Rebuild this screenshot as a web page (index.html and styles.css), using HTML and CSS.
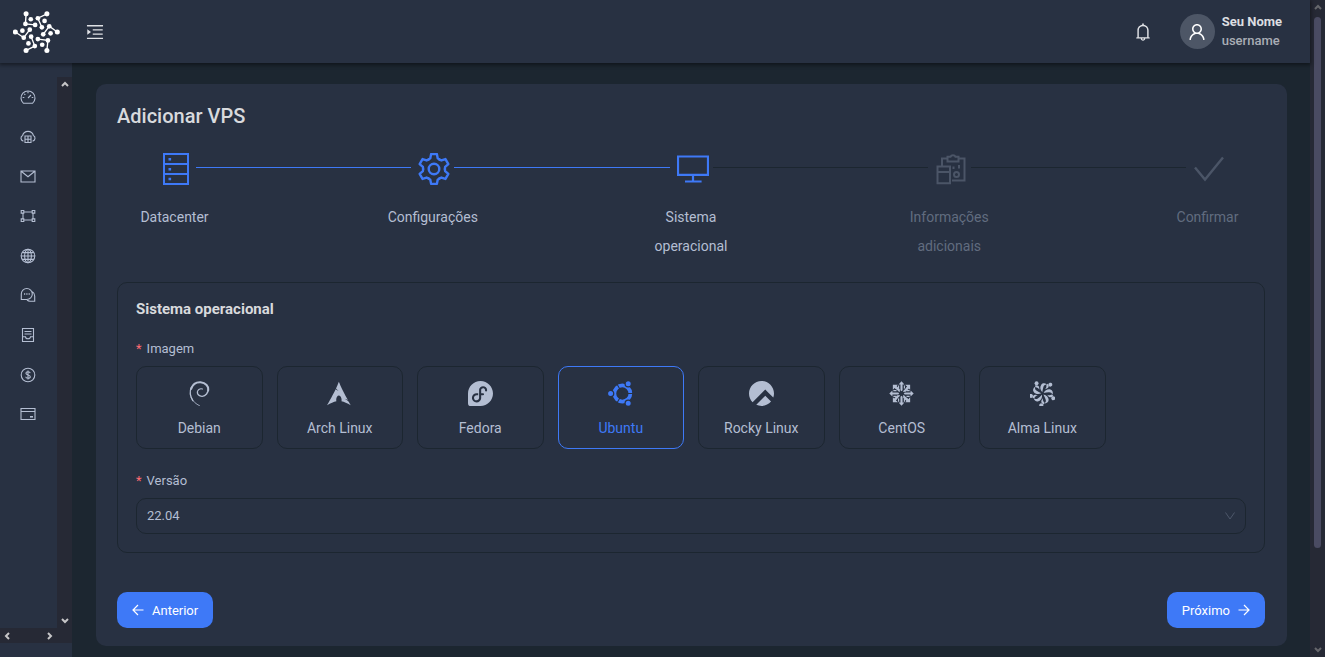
FILE: index.html
```html
<!DOCTYPE html>
<html lang="pt-BR">
<head>
<meta charset="utf-8">
<meta name="viewport" content="width=device-width, initial-scale=1">
<title>Adicionar VPS</title>
<link rel="stylesheet" href="styles.css">
</head>
<body>
<div class="window">
  <div class="app">
    <header class="topbar">
      <a class="logo" href="#" aria-label="Início">
        <svg viewBox="39 33 140 124" width="47" height="42" fill="#fff" stroke="#fff">
          <g fill="none" stroke-width="4">
            <path d="M78 41 76 71 105 74M140 41 113 54 125 81M171 95 147 78 129 102M140 150 143 120 113 116M78 150 104 137 93 109M46 95 71 112 89 88"/>
          </g>
          <g stroke="none">
            <circle cx="78" cy="41" r="7.5"/><circle cx="76" cy="71" r="7"/><circle cx="105" cy="74" r="7"/><circle cx="92" cy="57" r="7"/>
            <circle cx="140" cy="41" r="7.5"/><circle cx="113" cy="54" r="7"/><circle cx="125" cy="81" r="7"/><circle cx="133" cy="62" r="7"/>
            <circle cx="171" cy="95" r="7.5"/><circle cx="147" cy="78" r="7"/><circle cx="129" cy="102" r="7"/><circle cx="151" cy="99" r="7"/>
            <circle cx="140" cy="150" r="7.5"/><circle cx="143" cy="120" r="7"/><circle cx="113" cy="116" r="7"/><circle cx="126" cy="133" r="7"/>
            <circle cx="78" cy="150" r="7.5"/><circle cx="104" cy="137" r="7"/><circle cx="93" cy="109" r="7"/><circle cx="85" cy="129" r="7"/>
            <circle cx="46" cy="95" r="7.5"/><circle cx="71" cy="112" r="7"/><circle cx="89" cy="88" r="7"/><circle cx="67" cy="91" r="7"/>
          </g>
        </svg>
      </a>
      <button class="icon-button" type="button" aria-label="Abrir menu">
        <svg viewBox="64 64 896 896" width="18" height="18" fill="currentColor"><path d="M408 442h480c4.400 0 8-3.600 8-8v-56c0-4.400-3.600-8-8-8H408c-4.400 0-8 3.600-8 8v56c0 4.400 3.600 8 8 8zm-8 204c0 4.400 3.600 8 8 8h480c4.400 0 8-3.600 8-8v-56c0-4.400-3.600-8-8-8H408c-4.400 0-8 3.600-8 8v56zm504-486H120c-4.400 0-8 3.600-8 8v56c0 4.400 3.600 8 8 8h784c4.400 0 8-3.600 8-8v-56c0-4.400-3.600-8-8-8zm0 632H120c-4.400 0-8 3.600-8 8v56c0 4.400 3.600 8 8 8h784c4.400 0 8-3.600 8-8v-56c0-4.400-3.600-8-8-8zM142.400 642.100L298.700 519a8.840 8.840 0 000-13.900L142.400 381.900c-5.800-4.600-14.400-.5-14.400 6.900v246.300a8.900 8.900 0 0014.400 7z"/></svg>
      </button>
      <div class="account">
        <button class="icon-button" type="button" aria-label="Notificações">
          <svg viewBox="64 64 896 896" width="18" height="18" fill="currentColor"><path d="M816 768h-24V428c0-141.100-104.300-257.800-240-277.200V112c0-22.100-17.900-40-40-40s-40 17.900-40 40v38.800C336.300 170.200 232 286.900 232 428v340h-24c-17.700 0-32 14.300-32 32v32c0 4.400 3.600 8 8 8h216c0 61.800 50.200 112 112 112s112-50.200 112-112h216c4.400 0 8-3.600 8-8v-32c0-17.700-14.300-32-32-32zM512 888c-26.500 0-48-21.500-48-48h96c0 26.500-21.500 48-48 48zM304 768V428c0-55.600 21.600-107.800 60.900-147.100S456.400 220 512 220c55.600 0 107.800 21.600 147.100 60.900S720 372.400 720 428v340H304z"/></svg>
        </button>
        <span class="avatar">
          <svg viewBox="64 64 896 896" width="18" height="18" fill="currentColor"><path d="M858.500 763.600a374 374 0 00-80.600-119.500 375.630 375.630 0 00-119.500-80.600c-.4-.2-.8-.3-1.200-.5C719.500 518 760 444.700 760 362c0-137-111-248-248-248S264 225 264 362c0 82.700 40.500 156 102.800 201.100-.4.2-.8.3-1.200.5-44.800 18.900-85 46-119.500 80.600a375.630 375.630 0 00-80.600 119.500A371.700 371.700 0 00136 901.800a8 8 0 008 8.200h60c4.400 0 7.900-3.500 8-7.800 2-77.200 33-149.500 87.800-204.300 56.700-56.700 132-87.900 212.200-87.900s155.500 31.200 212.200 87.900C779 752.700 810 825 812 902.200c.1 4.400 3.600 7.800 8 7.800h60a8 8 0 008-8.200c-1-47.800-10.900-94.300-29.500-138.200zM512 534c-45.900 0-89.100-17.900-121.600-50.400S340 407.900 340 362c0-45.900 17.900-89.100 50.400-121.600S466.100 190 512 190s89.100 17.900 121.600 50.400S684 316.100 684 362c0 45.900-17.900 89.100-50.400 121.600S557.900 534 512 534z"/></svg>
        </span>
        <div class="identity">
          <span class="identity-name">Seu Nome</span>
          <span class="identity-user">username</span>
        </div>
      </div>
    </header>

    <div class="body">
      <aside class="sidebar">
        <div class="sidebar-view">
          <nav class="menu" aria-label="Principal">
            <a href="#" aria-label="Painel"><svg viewBox="0 0 16 16"><path d="M3.500 14.300a7 7 0 1 1 9 0zM8 9l3-3M8 2.700v1.600M2.700 8.500h1.600M11.700 8.500h1.600M4.300 4.900l1 1"/></svg></a>
            <a href="#" aria-label="Servidores"><svg viewBox="0 0 16 16"><path d="M3.400 12.100A3 3 0 0 1 2.600 6.500 5.600 5.600 0 0 1 13.400 6.500a3 3 0 0 1-.8 5.600M5 7h6v6.500H5zM5 10.200h6M8 7v6.500"/></svg></a>
            <a href="#" aria-label="E-mail"><svg viewBox="0 0 16 16"><path d="M1 3h14v11H1zM1.500 3.500 8 8.700 14.500 3.500"/></svg></a>
            <a href="#" aria-label="Rede"><svg viewBox="0 0 16 16"><path d="M4 4h8M4 12h8M3 5v6M13 5v6M1.200 2.500h2.600v2.600H1.200zM12.200 2.500h2.600v2.600h-2.600zM1.200 10.900h2.600v2.600H1.200zM12.200 10.900h2.600v2.600h-2.600z"/></svg></a>
            <a href="#" aria-label="Domínios"><svg viewBox="0 0 16 16"><circle cx="8" cy="8" r="6.800"/><ellipse cx="8" cy="8" rx="3.400" ry="6.800"/><path d="M8 1v14M1 8h14M2.300 4.600h11.400M2.300 11.400h11.400"/></svg></a>
            <a href="#" aria-label="Suporte"><svg viewBox="0 0 16 16"><path d="M1.300 12.500V7a5.500 5.500 0 1 1 5.500 5.500zM12.300 4.600a5 5 0 0 1 2.400 4.400v5.200H10a5 5 0 0 1-3-1.200"/><path stroke-width="1.400" d="M4 7h1.200M6.300 7h1.200M8.600 7h1.200"/></svg></a>
            <a href="#" aria-label="Faturas"><svg viewBox="0 0 16 16"><path d="M2.500 1.500h11v13h-11zM4.500 4.500h7M4.500 7h7M2.500 9.800h3a2.500 2 0 0 0 5 0h3"/></svg></a>
            <a href="#" aria-label="Pagamentos"><svg viewBox="0 0 16 16"><circle cx="8" cy="8" r="6.800"/><path d="M10.200 6.200C10 5.200 9.100 4.800 8 4.800c-1.200 0-2.100.6-2.100 1.500 0 2.200 4.400 1.100 4.400 3.400 0 1-1 1.600-2.300 1.600-1.200 0-2.200-.6-2.300-1.600M8 3.500v9"/></svg></a>
            <a href="#" aria-label="Cartões"><svg viewBox="0 0 16 16"><path d="M1 2.500h14v11H1zM1 5.500h14"/><path stroke-width="1.600" d="M10 10.800h3"/></svg></a>
          </nav>
          <div class="bar-y" aria-hidden="true">
            <svg class="arrow" viewBox="0 0 8 6"><path d="M1 5 4 2l3 3"/></svg>
            <svg class="arrow" viewBox="0 0 8 6"><path d="M1 1l3 3 3-3"/></svg>
          </div>
        </div>
        <div class="bar-x" aria-hidden="true">
          <svg class="arrow-side" viewBox="0 0 6 8"><path d="M5 1 2 4l3 3"/></svg>
          <svg class="arrow-side" viewBox="0 0 6 8"><path d="M1 1l3 3-3 3"/></svg>
        </div>
      </aside>

      <main class="content">
        <section class="card">
          <h1 class="title">Adicionar VPS</h1>

          <ol class="steps">
            <li class="step done">
              <svg class="step-icon" viewBox="0 0 32 32"><path d="M4 1h24v30H4zM4 11h24M4 21h24"/><path stroke-width="2.600" d="M8.500 6.300h2.600M8.500 16.200h2.600M8.500 26h2.600"/></svg>
              <span class="step-label">Datacenter</span>
            </li>
            <li class="step done">
              <svg class="step-icon" viewBox="0 0 32 32"><g transform="translate(16 16)" stroke-width="2.400" stroke-linejoin="round" stroke-linecap="round">
                <circle r="5.300"/>
                <path id="tooth" d="M-5.450-9.440-3.700-10.700-2.900-14.900H2.900L3.700-10.700 5.450-9.440"/>
                <use href="#tooth" transform="rotate(60)"/><use href="#tooth" transform="rotate(120)"/><use href="#tooth" transform="rotate(180)"/><use href="#tooth" transform="rotate(240)"/><use href="#tooth" transform="rotate(300)"/>
              </g></svg>
              <span class="step-label">Configurações</span>
            </li>
            <li class="step current" aria-current="step">
              <svg class="step-icon" viewBox="0 0 32 32"><path stroke-width="2.200" d="M1 3.500h30v18.300H1zM16 22v6M8 28.500h16.600"/></svg>
              <span class="step-label">Sistema operacional</span>
            </li>
            <li class="step">
              <svg class="step-icon" viewBox="0 0 32 32"><path d="M7 13V5.500h5M23 5.500h6.500v22H17M12.500 3.800h3a2.600 2 0 0 1 5 0h3V8.500h-11zM2.500 13.500H15v16.800H2.500zM2.500 19H15"/><circle cx="21.500" cy="21.500" r="2.500"/><path d="M18.500 13.500v2.500M24 12v3.500"/></svg>
              <span class="step-label">Informações adicionais</span>
            </li>
            <li class="step">
              <svg class="step-icon" viewBox="0 0 32 32"><path stroke-width="2.400" d="M2 14.500 12 26.500 30 4.500"/></svg>
              <span class="step-label">Confirmar</span>
            </li>
          </ol>

          <form class="form">
            <div class="panel">
              <h2 class="panel-title">Sistema operacional</h2>
              <fieldset class="field">
                <legend class="label required">Imagem</legend>
                <div class="images">
                  <label class="image"><input type="radio" name="image">
                    <svg viewBox="0 0 24 24"><g fill="none" stroke="currentColor" stroke-linecap="round"><path stroke-width=".8" d="M12 23.700C8.500 22 5.500 19.500 4 16"/><path stroke-width="1.300" d="M5.600 18.800C2.900 14.500 2.400 10 4.200 6"/><path stroke-width="1.900" d="M4 7.500C5.500 3 9 1 13 1.200c5 .3 8 4 7.300 8"/><path stroke-width="1.300" d="M20.400 7.500c.2 4-2.700 7-5.700 7.200-3 .2-5-2-4.700-4.300"/><path stroke-width="1" d="M10 10.800c.1-2.300 2-3.800 4.900-3.100M6 4l-1.500 2"/></g></svg>
                    <span>Debian</span></label>
                  <label class="image"><input type="radio" name="image">
                    <svg viewBox="0 0 24 24" fill="currentColor"><path d="M11.390.605C10.376 3.092 9.764 4.720 8.635 7.132c.693.734 1.543 1.589 2.923 2.554-1.484-.61-2.496-1.224-3.252-1.860C6.860 10.842 4.596 15.138 0 23.395c3.612-2.085 6.412-3.370 9.021-3.862a6.610 6.610 0 01-.171-1.547l.003-.115c.058-2.315 1.261-4.095 2.687-3.973 1.426.12 2.534 2.096 2.478 4.409a6.520 6.520 0 01-.146 1.243c2.580.505 5.352 1.787 8.914 3.844-.702-1.293-1.330-2.459-1.929-3.570-.943-.73-1.926-1.682-3.933-2.713 1.380.359 2.367.772 3.137 1.234-6.090-11.334-6.582-12.840-8.670-17.740z"/></svg>
                    <span>Arch Linux</span></label>
                  <label class="image"><input type="radio" name="image">
                    <svg viewBox="0 0 24 24" fill="currentColor"><path d="M12.001 0C5.376 0 .008 5.369.004 11.992H.002v9.287h.002A2.726 2.726 0 0 0 2.730 24h9.275c6.626-.004 11.993-5.372 11.993-11.997C23.998 5.375 18.628 0 12 0zm2.431 4.940c2.015 0 3.917 1.543 3.917 3.671 0 .197.001.395-.03.619a1.002 1.002 0 0 1-1.137.893 1.002 1.002 0 0 1-.842-1.175 2.610 2.610 0 0 0 .013-.337c0-1.207-.987-1.672-1.920-1.672-.934 0-1.775.784-1.777 1.672.016 1.027 0 2.046 0 3.070l1.732-.012c1.352-.028 1.368 2.009.016 1.998l-1.748.013c-.004.826.006.677.002 1.093 0 0 .015 1.010-.016 1.776-.209 2.250-2.124 4.046-4.424 4.046-2.438 0-4.448-1.993-4.448-4.437.073-2.515 2.078-4.492 4.603-4.469l1.409-.01v1.996l-1.409.013h-.007c-1.388.04-2.577.984-2.600 2.470a2.438 2.438 0 0 0 2.452 2.439c1.356 0 2.441-.987 2.441-2.437l-.001-7.557c0-.14.005-.252.02-.407.23-1.848 1.883-3.256 3.754-3.256z"/></svg>
                    <span>Fedora</span></label>
                  <label class="image"><input type="radio" name="image" checked>
                    <svg viewBox="0 0 24 24" fill="currentColor"><circle cx="13.800" cy="12" r="7.700" fill="none" stroke="currentColor" stroke-width="3.600"/><g stroke="#283142"><path stroke-width="1" d="M13.800 12H24M13.800 12 8.300 2.500M13.800 12 8.300 21.500"/><circle cx="2.500" cy="12" r="3" stroke-width="1.200"/><circle cx="19.400" cy="2.600" r="3" stroke-width="1.200"/><circle cx="19.400" cy="21.400" r="3" stroke-width="1.200"/></g></svg>
                    <span>Ubuntu</span></label>
                  <label class="image"><input type="radio" name="image">
                    <svg viewBox="0 0 24 24" fill="currentColor"><path d="M23.332 15.957c.433-1.239.668-2.570.668-3.957 0-6.627-5.373-12-12-12S0 5.373 0 12c0 3.280 1.315 6.251 3.447 8.417L15.620 8.245l3.005 3.005zm-2.192 3.819l-5.520-5.520L6.975 22.900c1.528.706 3.230 1.100 5.025 1.100 3.661 0 6.940-1.640 9.140-4.224z"/></svg>
                    <span>Rocky Linux</span></label>
                  <label class="image"><input type="radio" name="image">
                    <svg viewBox="0 0 24 24" fill="currentColor"><g id="ray"><path d="M12 .3l2.800 3H13v5.500l-1 1-1-1V3.300H9.200z"/><path d="M3.700 3.700h4.800L7.300 4.900l3.100 3.100v1.900L5 6.600 4.900 7.300 3.700 8.500z"/><path fill="none" stroke="currentColor" stroke-width="1.100" d="M9.200 4.200v3M14.800 4.200v3M5.500 5.500l4.700 4.700"/></g><use href="#ray" transform="rotate(90 12 12)"/><use href="#ray" transform="rotate(180 12 12)"/><use href="#ray" transform="rotate(270 12 12)"/></svg>
                    <span>CentOS</span></label>
                  <label class="image"><input type="radio" name="image">
                    <svg viewBox="0 0 24 24" fill="currentColor"><g id="petal"><circle cx="6.300" cy="2.200" r="1.900"/><path d="M11.800 10.800C9.500 8.500 9.400 5.500 10.800 3.600c1.200-1.700 3.600-1.900 5.300-.3-1.900.1-2.900 1-3.300 2.600-.4 1.500-.8 3-1 4.900z"/><path d="M4.800 4.200c2.700-.7 4.500.5 4.200 4.200-.7-1.400-2-2.300-3.800-2.400z"/></g><use href="#petal" transform="rotate(72 12 12)"/><use href="#petal" transform="rotate(144 12 12)"/><use href="#petal" transform="rotate(216 12 12)"/><use href="#petal" transform="rotate(288 12 12)"/></svg>
                    <span>Alma Linux</span></label>
                </div>
              </fieldset>
              <div class="field">
                <label class="label required" for="version">Versão</label>
                <div class="select">
                  <select id="version"><option>22.04</option></select>
                  <svg class="select-icon" viewBox="0 0 12 12"><path d="M1.500 2.500 6 9l4.500-6.500"/></svg>
                </div>
              </div>
            </div>
            <div class="actions">
              <button class="button" type="button"><svg viewBox="0 0 12 12"><path d="M11.500 6H1M6 1 1 6l5 5"/></svg>Anterior</button>
              <button class="button" type="button">Próximo<svg viewBox="0 0 12 12"><path d="M.5 6H11M6 1l5 5-5 5"/></svg></button>
            </div>
          </form>
        </section>
      </main>
    </div>
  </div>
  <div class="page-bar" aria-hidden="true">
    <svg class="arrow" viewBox="0 0 8 6"><path d="M1 5 4 2l3 3"/></svg>
    <div class="page-track"><div class="page-thumb"></div></div>
    <svg class="arrow" viewBox="0 0 8 6"><path d="M1 1l3 3 3-3"/></svg>
  </div>
</div>
</body>
</html>
```
FILE: styles.css
```css
:root {
  --surface: #283142;
  --page: #1c2630;
  --track: #262935;
  --primary: #3e79f7;
  --text: #b4bed2;
  --heading: #d8dadd;
}

* { box-sizing: border-box; }

body {
  margin: 0;
  background: var(--page);
  color: var(--text);
  font-family: Roboto, "Liberation Sans", sans-serif;
  font-size: 14px;
}

svg { display: block; flex: none; }

.window { display: flex; min-height: 100vh; }
.app { flex: 1; min-width: 0; display: flex; flex-direction: column; }

/* Top bar */
.topbar {
  position: relative;
  z-index: 1;
  display: flex;
  align-items: center;
  height: 63px;
  padding: 0 28px 0 13px;
  background: var(--surface);
  box-shadow: 0 1px 4px 1px rgba(0, 0, 0, .45);
}
.logo { margin-right: 26px; }
.icon-button {
  padding: 0;
  border: 0;
  background: none;
  color: #dfe1e5;
}
.account { display: flex; align-items: center; margin-left: auto; }
.avatar {
  display: grid;
  place-items: center;
  width: 35px;
  height: 35px;
  margin: 0 7px 0 28px;
  border-radius: 50%;
  background: #4d5666;
  color: #fff;
}
.identity { display: flex; flex-direction: column; padding-bottom: 2px; font-size: 13px; line-height: 19px; }
.identity-name { color: #dcdee1; font-weight: 700; }
.identity-user { color: #a9adb5; font-weight: 500; }

/* Sidebar */
.body { flex: 1; display: flex; }
.sidebar {
  flex: none;
  width: 72px;
  display: flex;
  flex-direction: column;
  padding: 14px 0;
  background: var(--surface);
}
.sidebar-view { flex: 1; display: flex; }
.menu { flex: 1; display: flex; flex-direction: column; padding: 0 1px 194px 0; }
.menu a {
  flex: 1;
  display: grid;
  place-items: center;
  color: #b4bed2;
}
.menu svg { width: 16px; height: 16px; fill: none; stroke: currentColor; stroke-width: 1.1; }
.bar-y, .bar-x, .page-bar {
  display: flex;
  justify-content: space-between;
  align-items: center;
  background: var(--track);
}
.bar-y { flex-direction: column; width: 15px; padding: 4px 0; }
.bar-x { height: 15px; padding: 0 19px 0 4px; }
.arrow, .arrow-side { fill: none; stroke: #c6c6c8; stroke-width: 2; }
.arrow { width: 8px; height: 6px; }
.arrow-side { width: 6px; height: 8px; }

/* Page scrollbar */
.page-bar { flex: none; flex-direction: column; width: 15px; padding: 4px 0; }
.page-bar .arrow { stroke: #66676c; }
.page-track { flex: 1; width: 7px; margin: 7px 0 5px; }
.page-thumb { height: 85%; border-radius: 4px; background: #4a4b62; }

/* Card */
.content { flex: 1; min-width: 0; padding: 21px 23px 11px 24px; }
.card { padding: 21px 22px 18px 21px; border-radius: 10px; background: var(--surface); }
.title { margin: 0 0 26px; color: var(--heading); font-size: 20px; font-weight: 500; line-height: 22px; }

/* Steps */
.steps { display: flex; margin: 0 0 21px; padding: 0; list-style: none; }
.step { position: relative; flex: 1; color: #616c7f; }
.step:last-child { flex: none; }
.step-icon {
  width: 32px;
  height: 32px;
  margin: 0 0 18px 43px;
  fill: none;
  stroke: #4b5567;
  stroke-width: 2;
}
.step:not(:last-child)::after {
  content: "";
  position: absolute;
  top: 14px;
  left: 79px;
  right: -36px;
  height: 1px;
  background: var(--page);
}
.step.done::after { background: var(--primary); }
.step.done, .step.current { color: var(--text); }
.step.done .step-icon, .step.current .step-icon { stroke: var(--primary); }
.step-label { display: block; width: 115px; line-height: 29px; text-align: center; }

/* Form */
.panel { padding: 15px 18px 18px; border: 1px solid var(--page); border-radius: 10px; }
.panel-title { margin: 0 0 20px; color: var(--heading); font-size: 15px; font-weight: 700; line-height: 22px; }
.field { margin: 0; padding: 0; border: 0; min-width: 0; }
.field + .field { margin-top: 23px; }
.label { display: block; margin-bottom: 8px; padding: 0; font-size: 13px; line-height: 18px; }
.required::before { content: "*"; margin-right: 5px; color: #ff6b72; }
.images { display: grid; grid-template-columns: repeat(8, 1fr); gap: 14px; }
.image {
  position: relative;
  display: flex;
  flex-direction: column;
  align-items: center;
  gap: 12px;
  padding: 14px 0 10px;
  border: 1px solid var(--page);
  border-radius: 10px;
  line-height: 20px;
}
.image svg { width: 25px; height: 25px; }
.image input { position: absolute; inset: 0; margin: 0; opacity: 0; }
.image:has(input:checked) { border-color: var(--primary); color: var(--primary); }
.select { position: relative; }
.select select {
  display: block;
  width: 100%;
  height: 36px;
  padding: 0 10px 2px;
  border: 1px solid var(--page);
  border-radius: 10px;
  background: transparent;
  color: var(--text);
  font: inherit;
  font-size: 13px;
  appearance: none;
}
.select-icon {
  position: absolute;
  top: 12px;
  right: 10px;
  width: 12px;
  height: 12px;
  fill: none;
  stroke: #4d576a;
  pointer-events: none;
}
.actions { display: flex; justify-content: space-between; margin-top: 39px; }
.button {
  display: flex;
  align-items: center;
  gap: 8px;
  height: 36px;
  padding: 0 15px;
  border: 0;
  border-radius: 10px;
  background: var(--primary);
  color: #fff;
  font: 400 13px Roboto, "Liberation Sans", sans-serif;
}
.button svg { width: 12px; height: 12px; fill: none; stroke: currentColor; stroke-width: 1.2; }
```
